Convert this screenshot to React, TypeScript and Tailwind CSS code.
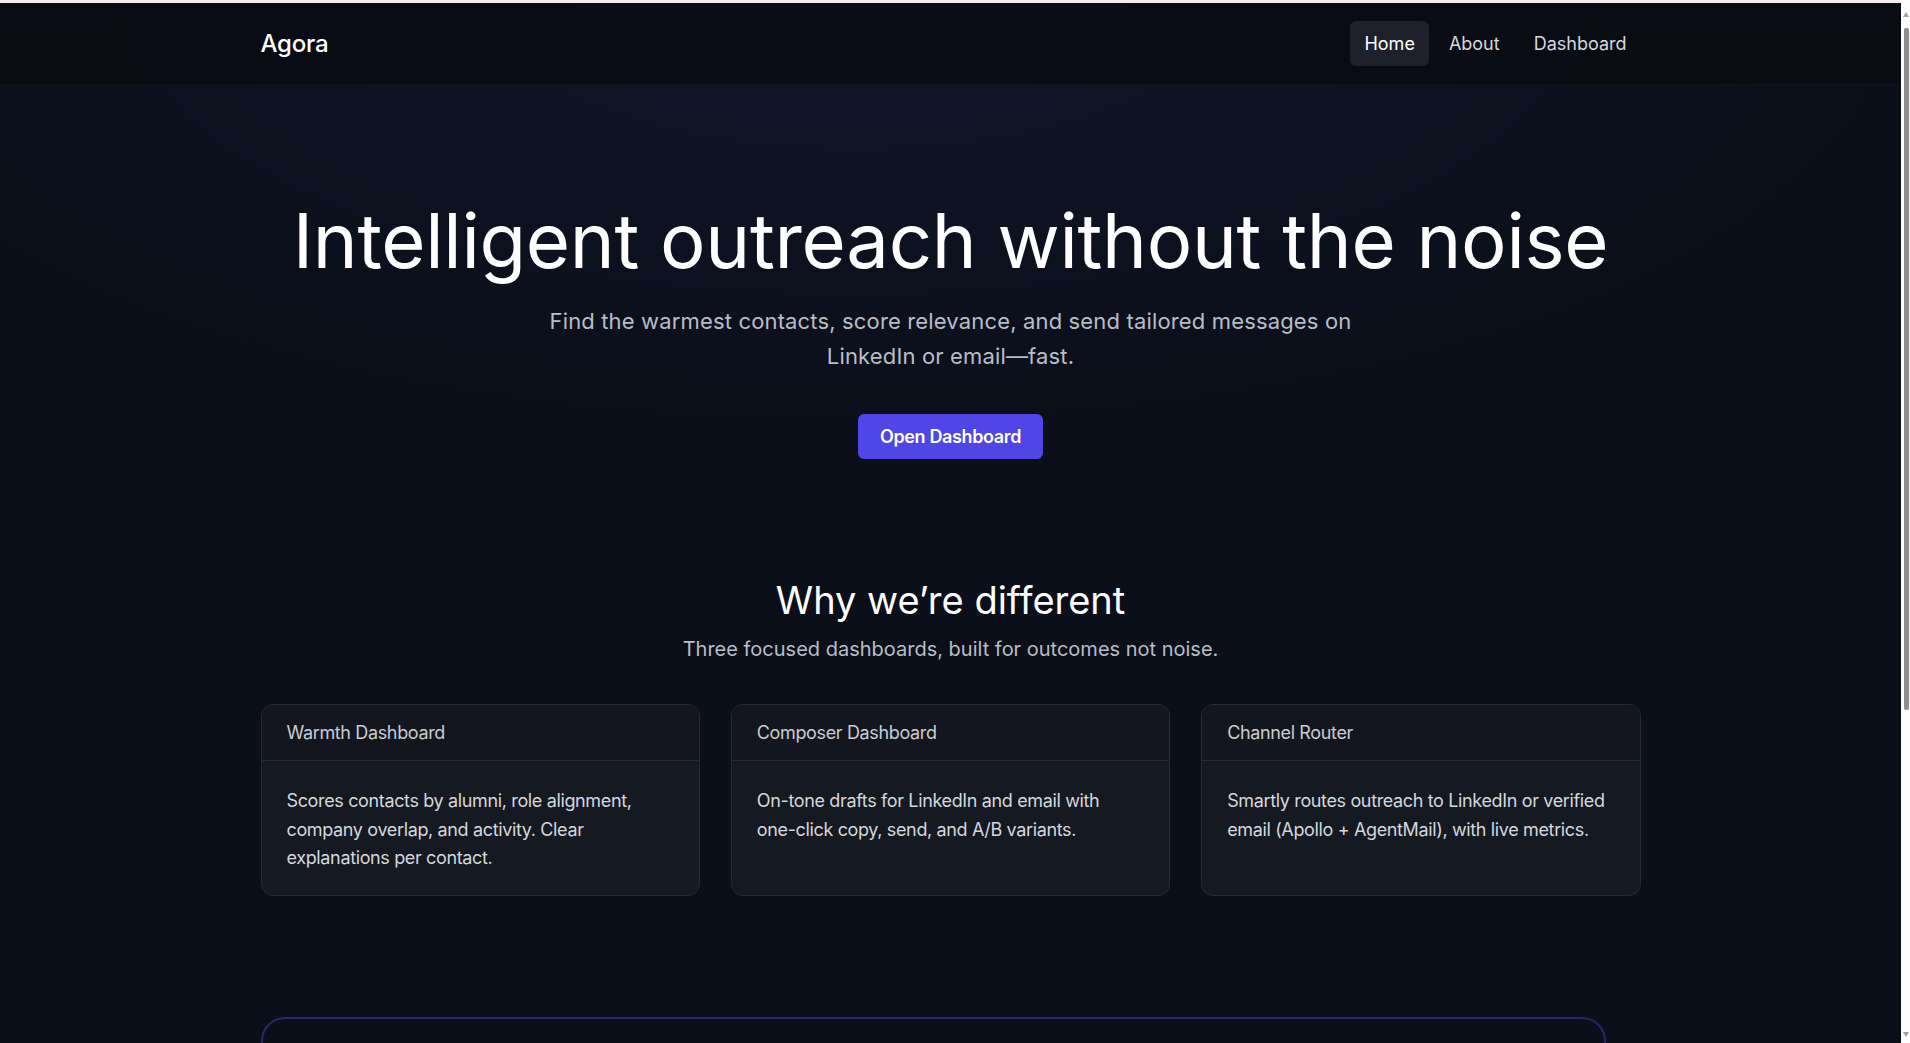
import type { ReactNode } from 'react'

const cards: { title: string; body: ReactNode }[] = [
  {
    title: 'Warmth Dashboard',
    body: 'Scores contacts by alumni, role alignment, company overlap, and activity. Clear explanations per contact.',
  },
  {
    title: 'Composer Dashboard',
    body: (
      <>
        On-tone drafts for LinkedIn and email with <span className="whitespace-nowrap">one-click</span> copy, send, and
        A/B variants.
      </>
    ),
  },
  {
    title: 'Channel Router',
    body: 'Smartly routes outreach to LinkedIn or verified email (Apollo + AgentMail), with live metrics.',
  },
]

export default function App() {
  return (
    <div className="bg-[#0b0f19]">
      <div className="mr-[9px] min-h-[1400px] bg-[#0b0f19] font-['Inter',sans-serif] text-white">
        {/* top browser strip */}
        <div className="h-[3px] bg-[#f6eeee]" />

        <div className="bg-[radial-gradient(ellipse_55%_420px_at_45%_0%,#13162b_0%,#0e1222_45%,#0b0f19_100%)]">
          {/* Nav */}
          <header className="bg-[#0a0c14]/90 border-b border-[#12141c]">
            <div className="max-w-[1380px] mx-auto h-[81px] flex items-center justify-between">
              <span className="text-[24px] font-medium tracking-[-0.01em] text-white">Agora</span>
              <nav className="flex items-center gap-[6px] text-[18px]">
                <a className="px-[14px] h-[45px] flex items-center rounded-[6px] bg-[#1e212c] text-white">Home</a>
                <a className="px-[14px] h-[45px] flex items-center rounded-[6px] text-[#d5d8de]">About</a>
                <a className="px-[14px] h-[45px] flex items-center rounded-[6px] text-[#d5d8de]">Dashboard</a>
              </nav>
            </div>
          </header>

          {/* Hero */}
          <section className="pt-[113px] flex flex-col items-center text-center">
            <h1 className="text-[76px] leading-[84px] font-normal tracking-[-0.004em] text-white">
              Intelligent outreach without the noise
            </h1>
            <p className="mt-[22px] max-w-[830px] text-[22px] leading-[35px] tracking-[0.007em] text-[#b9bdc7]">
              Find the warmest contacts, score relevance, and send tailored messages on LinkedIn or email—fast.
            </p>
            <button className="mt-[40px] h-[45px] px-[22px] rounded-[6px] bg-[#4f46e5] text-[18px] font-semibold tracking-[-0.02em] text-white">
              Open Dashboard
            </button>
          </section>
        </div>

        {/* Why we're different */}
        <section className="pt-[117px] flex flex-col items-center">
          <h2 className="text-[38px] leading-[48px] font-normal text-white">Why we’re different</h2>
          <p className="mt-[11px] text-[20px] leading-[28px] text-[#b9bdc7]">
            Three focused dashboards, built for outcomes not noise.
          </p>

          <div className="mt-[41px] w-[1380px] grid grid-cols-3 gap-[31px]">
            {cards.map((c) => (
              <div key={c.title} className="h-[192px] rounded-[12px] border border-[#262a35] bg-[#151922] overflow-hidden">
                <div className="h-[56px] px-[25px] flex items-center border-b border-[#262a35] bg-[#13161f] text-[18px] tracking-[-0.02em] text-[#c9ccd3]">
                  {c.title}
                </div>
                <p className="px-[25px] pt-[26px] text-[18px] leading-[28.5px] tracking-[-0.02em] text-[#d4d7de]">
                  {c.body}
                </p>
              </div>
            ))}
          </div>

          {/* Bottom panel */}
          <div className="mt-[121px] w-[1380px]">
            <div className="w-[1345px] h-[320px] rounded-[24px] border-2 border-[#29276b] bg-[#0b0f19]" />
          </div>
        </section>
      </div>

      {/* scrollbar as captured */}
      <div className="fixed top-0 right-0 w-[9px] h-full bg-[#fcfcfc]">
        <div className="absolute top-[12px] left-[2px] w-0 h-0 border-l-[3px] border-r-[3px] border-b-[5px] border-l-transparent border-r-transparent border-b-[#a0a0a0]" />
        <div className="absolute top-[28px] left-[3px] w-[5px] h-[682px] rounded-[2px] bg-[#8f8f8f]" />
        <div className="absolute bottom-[6px] left-[2px] w-0 h-0 border-l-[3px] border-r-[3px] border-t-[5px] border-l-transparent border-r-transparent border-t-[#a0a0a0]" />
      </div>
    </div>
  )
}
